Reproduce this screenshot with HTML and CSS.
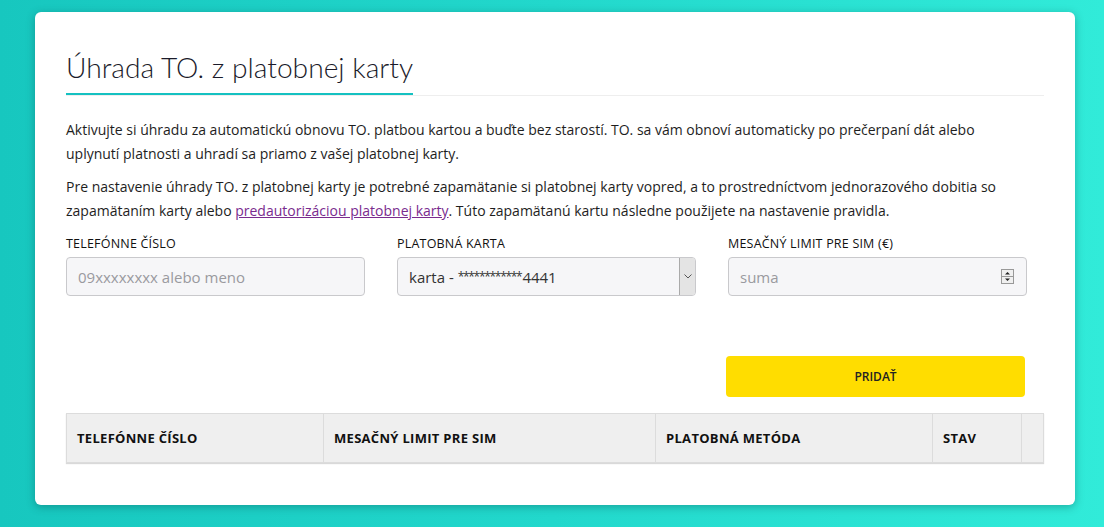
FILE: index.html
```html
<!DOCTYPE html>
<html lang="sk">
<head>
<meta charset="utf-8">
<title>Úhrada TO. z platobnej karty</title>
<link rel="stylesheet" href="styles.css">
</head>
<body>
<main class="card">
  <div class="title-wrap">
    <h1 class="title">Úhrada TO. z platobnej karty</h1>
  </div>
  <p class="text">Aktivujte si úhradu za automatickú obnovu TO. platbou kartou a buďte bez starostí. TO. sa vám obnoví automaticky po prečerpaní dát alebo uplynutí platnosti a uhradí sa priamo z vašej platobnej karty.</p>
  <p class="text">Pre nastavenie úhrady TO. z platobnej karty je potrebné zapamätanie si platobnej karty vopred, a to prostredníctvom jednorazového dobitia so zapamätaním karty alebo <a href="#" class="link">predautorizáciou platobnej karty</a>. Túto zapamätanú kartu následne použijete na nastavenie pravidla.</p>
  <div class="form">
    <div class="field">
      <label class="label">TELEFÓNNE ČÍSLO</label>
      <div class="input"><span class="placeholder">09xxxxxxxx alebo meno</span></div>
    </div>
    <div class="field">
      <label class="label">PLATOBNÁ KARTA</label>
      <div class="input select"><span class="value">karta - <span class="stars">************</span>4441</span>
        <span class="select-btn"><svg width="8" height="5" viewBox="0 0 8 5"><path d="M0.5 0.5 L4 4 L7.5 0.5" fill="none" stroke="#555" stroke-width="1"/></svg></span>
      </div>
    </div>
    <div class="field">
      <label class="label">MESAČNÝ LIMIT PRE SIM (€)</label>
      <div class="input number"><span class="placeholder">suma</span>
        <span class="spin"><svg width="13" height="15" viewBox="0 0 13 15"><rect x="0.5" y="0.5" width="12" height="14" fill="#f0f0f0" stroke="#999"/><line x1="1" y1="7.5" x2="12" y2="7.5" stroke="#999"/><path d="M4 5.5 L6.5 3 L9 5.5Z" fill="#222"/><path d="M4 9.5 L6.5 12 L9 9.5Z" fill="#222"/></svg></span>
      </div>
    </div>
  </div>
  <div class="actions">
    <button class="btn">PRIDAŤ</button>
  </div>
  <table class="table">
    <thead>
      <tr>
        <th class="c1">TELEFÓNNE ČÍSLO</th>
        <th class="c2">MESAČNÝ LIMIT PRE SIM</th>
        <th class="c3">PLATOBNÁ METÓDA</th>
        <th class="c4">STAV</th>
        <th class="c5"></th>
      </tr>
    </thead>
  </table>
</main>
</body>
</html>
```
FILE: styles.css
```css
html, body {
  margin: 0;
  padding: 0;
}
body {
  width: 1104px;
  height: 527px;
  box-sizing: border-box;
  padding: 12px 29px 0 35px;
  background: linear-gradient(90deg, #17c7bf 0%, #22d8cc 50%, #31ebd9 100%);
  font-family: "Open Sans", "Liberation Sans", sans-serif;
  color: #222;
  overflow: hidden;
}
.card {
  width: 1040px;
  height: 493px;
  box-sizing: border-box;
  background: #fff;
  border-radius: 6px;
  box-shadow: 0 2px 8px rgba(0, 60, 60, 0.35);
  padding: 40px 31px 0 31px;
}
.title-wrap {
  border-bottom: 1px solid #eee;
  height: 43px;
}
.title {
  display: inline-block;
  margin: 0;
  font-family: "Lato", "Open Sans", sans-serif;
  font-size: 28.2px;
  font-weight: 300;
  line-height: 30px;
  color: #1b1b2a;
  padding-bottom: 11px;
  border-bottom: 2px solid #14c1c1;
}
.text {
  margin: 22px 0 0 0;
  max-width: 945px;
  font-size: 14px;
  line-height: 24px;
  color: #1e1e1e;
}
.text + .text {
  margin-top: 9px;
}
.link {
  color: #7a2b8e;
  text-decoration: underline;
}
.form {
  display: grid;
  grid-template-columns: 299px 299px 299px;
  column-gap: 32px;
  margin-top: 13px;
}
.label {
  display: block;
  font-size: 12.5px;
  letter-spacing: 0.2px;
  line-height: 16px;
  color: #111;
  margin-bottom: 5px;
}
.input {
  height: 39px;
  box-sizing: border-box;
  background: #f6f6f8;
  border: 1px solid #c9c9cc;
  border-radius: 4px;
  display: flex;
  align-items: center;
  padding-left: 11px;
  font-size: 15px;
}
.placeholder {
  color: #9a9a9f;
}
.value {
  color: #333;
  flex: 1;
}
.stars {
  font-size: 12px;
  letter-spacing: -1.3px;
  vertical-align: 2px;
  margin-right: 1px;
}
.select {
  padding-right: 0;
}
.select-btn {
  width: 16px;
  height: 37px;
  box-sizing: border-box;
  border-left: 1px solid #aaa;
  background: #e4e4e4;
  display: flex;
  align-items: center;
  justify-content: center;
  border-radius: 0 3px 3px 0;
}
.number {
  justify-content: space-between;
  padding-right: 12px;
}
.spin {
  display: flex;
}
.actions {
  width: 961px;
  display: flex;
  justify-content: flex-end;
  margin-top: 60px;
}
.btn {
  width: 299px;
  height: 41px;
  margin-right: 2px;
  background: #ffdd00;
  border: 0;
  border-radius: 4px;
  font-family: "Open Sans", "Liberation Sans", sans-serif;
  font-size: 12px;
  font-weight: 600;
  color: #222;
}
.table {
  margin-top: 16px;
  width: 977px;
  border-collapse: collapse;
  table-layout: fixed;
  box-shadow: 0 1px 1px rgba(0,0,0,0.15);
}
.table th {
  height: 49px;
  box-sizing: border-box;
  background: #efefef;
  border: 1px solid #dcdcdc;
  text-align: left;
  padding: 0 10px;
  font-size: 13px;
  letter-spacing: 0.3px;
  font-weight: 700;
  color: #111;
}
.c1 { width: 257px; }
.c2 { width: 332px; }
.c3 { width: 277px; }
.c4 { width: 89px; }
.c5 { width: 22px; }
```
